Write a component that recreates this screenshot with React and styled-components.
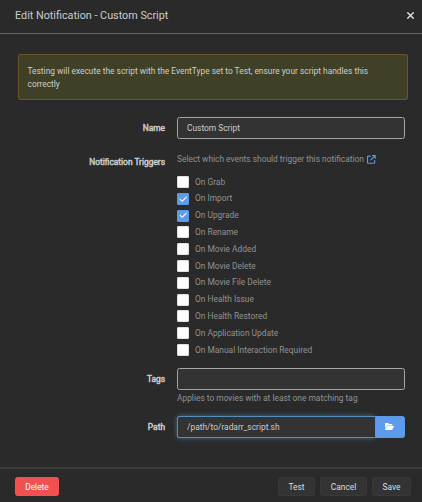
import React, { useState } from 'react';
import styled, { createGlobalStyle, css } from 'styled-components';
import { FaArrowUpRightFromSquare, FaCheck, FaFolderOpen, FaXmark } from 'react-icons/fa6';

const GlobalStyle = createGlobalStyle`
  *, *::before, *::after { box-sizing: border-box; }
  body {
    margin: 0;
    background: #2a2a2a;
    color: #ccc;
    font-family: Roboto, 'Open Sans', sans-serif;
    font-size: 8.4px;
    line-height: 12.84px;
  }
  button, input { font: inherit; color: inherit; }
`;

const Modal = styled.div`
  display: flex;
  flex-direction: column;
  height: 502px;
  overflow: hidden;
`;

const Header = styled.header`
  display: flex;
  flex: none;
  align-items: center;
  justify-content: space-between;
  height: 34px;
  padding: 0 6px 2px 15px;
  border-bottom: 1px solid #656565;
`;

const Title = styled.h1`
  margin: 0;
  font-size: 10.8px;
  font-weight: 400;
  line-height: 15px;
`;

const CloseButton = styled.button`
  display: flex;
  padding: 0;
  border: 0;
  background: none;
  color: #e1e2e3;
  font-size: 11px;
`;

const Body = styled.main`
  flex: 1;
  padding: 20px 14px 0 18px;
`;

const Alert = styled.div`
  height: 46px;
  padding: 9.5px 8.5px;
  border: 1px solid #6b552a;
  border-radius: 2px;
  background: #404026;
  line-height: 13px;
`;

const Group = styled.div`
  display: grid;
  grid-template-columns: 147px 228px;
  column-gap: 12px;
  margin-top: ${({ $gap }) => $gap}px;
`;

const Label = styled.label`
  padding-top: ${({ $top }) => $top || 5}px;
  -webkit-text-stroke: 0.45px currentColor;
  text-align: right;
`;

const inputFrame = css`
  height: 22px;
  border: 1px solid #a3a6a6;
  border-radius: 2.5px;
  background: #333;
`;

const TextInput = styled.input`
  ${inputFrame}
  display: block;
  width: 100%;
  padding: 0 9px;
  outline: none;
`;

const PathRow = styled.div`
  display: flex;
`;

const PathInput = styled(TextInput)`
  flex: 1;
  min-width: 0;
  border-color: #538fba;
  border-right: 0;
  border-radius: 2.5px 0 0 2.5px;
  box-shadow: 0 0 5px rgba(102, 175, 233, 0.5);
`;

const BrowseButton = styled.button`
  display: flex;
  align-items: center;
  justify-content: center;
  width: 30px;
  height: 22px;
  padding: 0 1px 0 0;
  border: 1px solid #5899eb;
  border-radius: 0 2.5px 2.5px 0;
  background: #5d9cec;
  color: #fff;
  font-size: 9px;
`;

const HelpText = styled.div`
  display: flex;
  align-items: center;
  gap: 3px;
  margin-top: ${({ $top }) => $top || 0}px;
  color: #909293;
  white-space: nowrap;
`;

const HelpLink = styled.span`
  display: flex;
  color: #5d9cec;
  font-size: 8.8px;
`;

const TriggerList = styled.div`
  padding-top: 7.8px;
`;

const Trigger = styled.label`
  display: flex;
  align-items: center;
  gap: 6px;
  height: 16.8px;
  color: #909293;
`;

const Box = styled.span`
  display: flex;
  flex: none;
  align-items: center;
  justify-content: center;
  width: 12px;
  height: 12px;
  border: 1px solid ${({ $checked }) => ($checked ? '#5899eb' : '#e0e0e0')};
  border-radius: 1px;
  background: ${({ $checked }) => ($checked ? '#5d9cec' : '#fff')};
  color: #fff;
  font-size: 8.4px;
`;

const HiddenCheckbox = styled.input`
  display: none;
`;

const Footer = styled.footer`
  display: flex;
  flex: none;
  align-items: flex-start;
  gap: 5px;
  height: 35px;
  padding: 8px 11px 0 15px;
  border-top: 2px solid #3c3c3c;
`;

const Button = styled.button`
  height: 19px;
  width: ${({ $width }) => $width}px;
  margin-right: ${({ $danger }) => ($danger ? 'auto' : '0')};
  padding: 0;
  border: 1px solid ${({ $danger }) => ($danger ? '#f05555' : '#393939')};
  border-radius: 2.5px;
  background: ${({ $danger }) => ($danger ? '#f05050' : '#333')};
  color: ${({ $danger }) => ($danger ? '#fff' : '#ddd')};
  line-height: 16px;
`;

const EVENTS = [
  'On Grab', 'On Import', 'On Upgrade', 'On Rename', 'On Movie Added',
  'On Movie Delete', 'On Movie File Delete', 'On Health Issue',
  'On Health Restored', 'On Application Update', 'On Manual Interaction Required',
];

export default function App() {
  const [enabled, setEnabled] = useState(['On Import', 'On Upgrade']);
  const toggle = (name) =>
    setEnabled((list) => (list.includes(name) ? list.filter((n) => n !== name) : [...list, name]));

  return (
    <Modal>
      <GlobalStyle />
      <Header>
        <Title>Edit Notification - Custom Script</Title>
        <CloseButton aria-label="Close"><FaXmark /></CloseButton>
      </Header>
      <Body>
        <Alert>
          Testing will execute the script with the EventType set to Test, ensure your script handles this correctly
        </Alert>
        <Group $gap={17}>
          <Label htmlFor="name">Name</Label>
          <TextInput id="name" defaultValue="Custom Script" />
        </Group>
        <Group $gap={14}>
          <Label as="div" $top={2.5}>Notification Triggers</Label>
          <div>
            <HelpText>
              Select which events should trigger this notification
              <HelpLink><FaArrowUpRightFromSquare /></HelpLink>
            </HelpText>
            <TriggerList>
              {EVENTS.map((name) => {
                const checked = enabled.includes(name);
                return (
                  <Trigger key={name}>
                    <HiddenCheckbox type="checkbox" checked={checked} onChange={() => toggle(name)} />
                    <Box $checked={checked}>{checked && <FaCheck />}</Box>
                    {name}
                  </Trigger>
                );
              })}
            </TriggerList>
          </div>
        </Group>
        <Group $gap={9.6}>
          <Label htmlFor="tags">Tags</Label>
          <div>
            <TextInput id="tags" />
            <HelpText $top={2}>Applies to movies with at least one matching tag</HelpText>
          </div>
        </Group>
        <Group $gap={11.1}>
          <Label htmlFor="path">Path</Label>
          <PathRow>
            <PathInput id="path" defaultValue="/path/to/radarr_script.sh" spellCheck={false} />
            <BrowseButton aria-label="Browse"><FaFolderOpen /></BrowseButton>
          </PathRow>
        </Group>
      </Body>
      <Footer>
        <Button $danger $width={44}>Delete</Button>
        <Button $width={37}>Test</Button>
        <Button $width={47}>Cancel</Button>
        <Button $width={39}>Save</Button>
      </Footer>
    </Modal>
  );
}
